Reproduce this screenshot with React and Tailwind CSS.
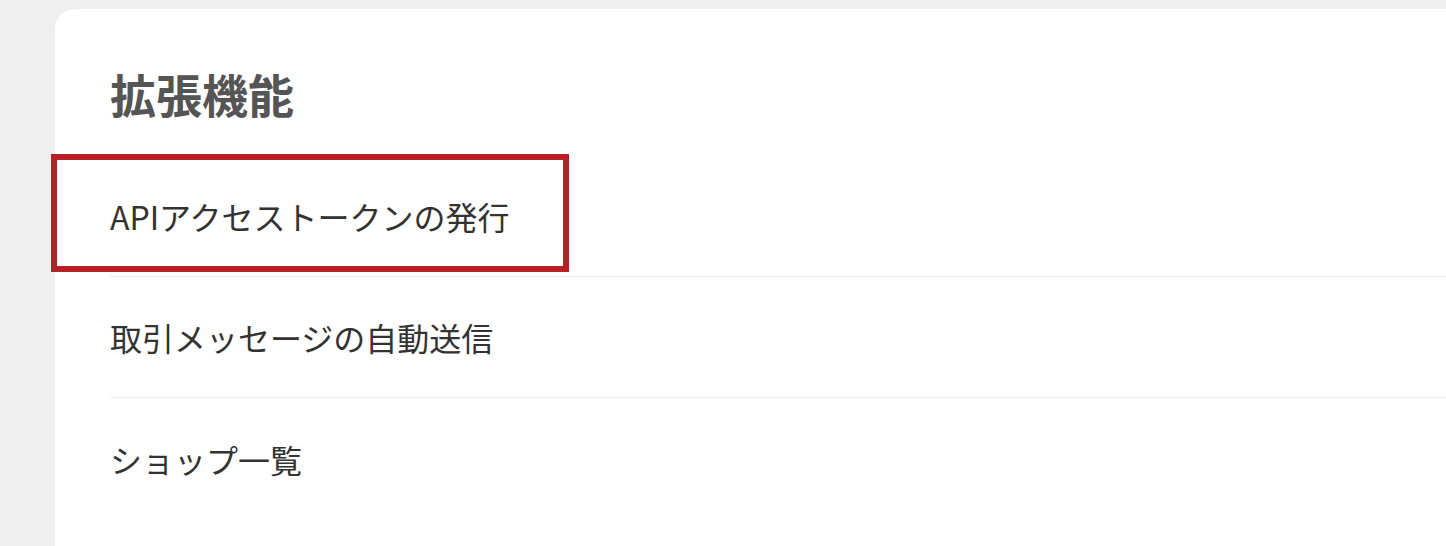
import React from 'react';

const items = [
  { id: 'api', label: 'APIアクセストークンの発行', highlighted: true },
  { id: 'msg', label: '取引メッセージの自動送信' },
  { id: 'shop', label: 'ショップ一覧' },
];

export default function App() {
  return (
    <div
      className="w-[1446px] h-[546px] overflow-hidden bg-[#efefef] pl-[55px] pt-[9px]"
      style={{ fontFamily: '"Noto Sans CJK JP", "Noto Sans", sans-serif' }}
    >
      <div className="bg-white rounded-tl-[20px] h-[600px] pl-[55px] pt-[61px]">
        <h1 className="text-[46px] leading-[46px] font-bold text-[#555555] mb-[40px]">拡張機能</h1>

        <ul>
          {items.map(item => (
            <li
              key={item.id}
              className="relative h-[121px] flex items-center border-b border-[#eceef2] last:border-b-0 text-[32px] text-[#333333]"
            >
              <span className="leading-none">{item.label}</span>
              {/* annotation frame over the first row */}
              {item.highlighted && (
                <div className="absolute left-[-59px] top-[-2px] w-[518px] h-[118px] border-[6px] border-[#b81f24]" />
              )}
            </li>
          ))}
        </ul>
      </div>
    </div>
  );
}
